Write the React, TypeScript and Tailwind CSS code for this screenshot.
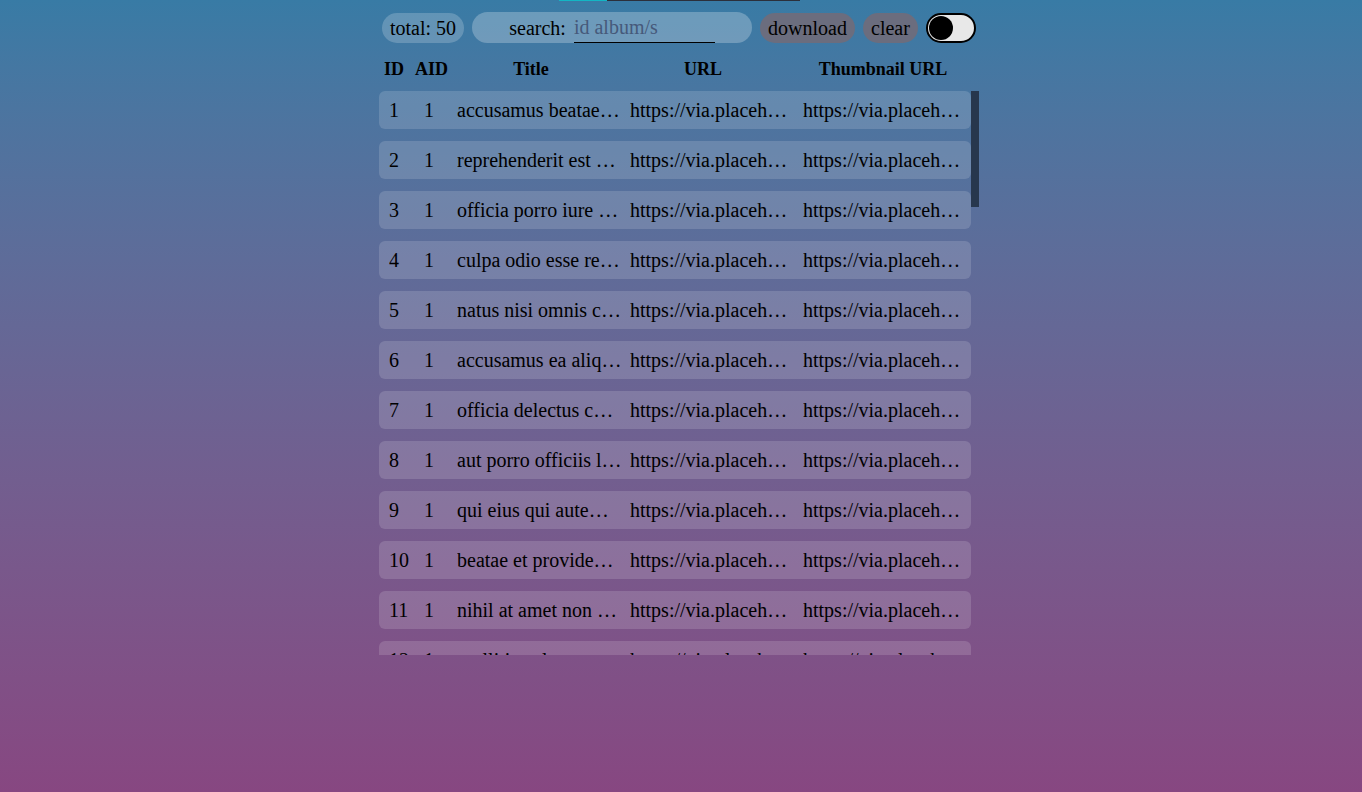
import { useState } from 'react';

interface Photo {
  id: number;
  albumId: number;
  title: string;
  url: string;
  thumbnailUrl: string;
}

const TITLES = [
  'accusamus beatae ad facilis cum similique qui sunt',
  'reprehenderit est deserunt velit ipsam',
  'officia porro iure quia iusto qui ipsa ut modi',
  'culpa odio esse rerum omnis laboriosam voluptate repudiandae',
  'natus nisi omnis corporis facere molestiae rerum in',
  'accusamus ea aliquid et amet sequi nemo',
  'officia delectus consequatur vero aut veniam explicabo molestias',
  'aut porro officiis laborum odit ea laudantium corporis',
  'qui eius qui autem sed',
  'beatae et provident et ut vel',
  'nihil at amet non hic quia qui',
  'mollitia soluta ut rerum eos aliquam consequatur perspiciatis maiores',
  'repudiandae iusto deleniti rerum',
  'est necessitatibus architecto ut laborum',
  'harum dicta similique quis dolore earum ex qui',
  'iusto sunt nobis quasi veritatis quas expedita voluptatum deserunt',
  'natus doloribus necessitatibus ipsa',
  'laboriosam odit nam necessitatibus et illum dolores reiciendis',
  'perferendis nesciunt eveniet et optio a',
  'assumenda voluptatem laboriosam enim consequatur veniam placeat reiciendis error',
];

const COLORS = ['92c952', '771796', '24f355', 'd32776', 'f66b97', '56a8c2', 'b0f7cc', '54176f', '51aa97', '810b14'];

const photos: Photo[] = Array.from({ length: 50 }, (_, i) => ({
  id: i + 1,
  albumId: 1,
  title: TITLES[i % TITLES.length],
  url: `https://via.placeholder.com/600/${COLORS[i % COLORS.length]}`,
  thumbnailUrl: `https://via.placeholder.com/150/${COLORS[i % COLORS.length]}`,
}));

function Toggle() {
  const [on, setOn] = useState(false);
  return (
    <button
      onClick={() => setOn(!on)}
      className="relative h-[30px] w-[50px] shrink-0 rounded-full border-2 border-black bg-[#e8e8e8]"
    >
      <span
        className={`absolute top-[1px] h-[24px] w-[24px] rounded-full bg-black ${on ? 'left-[22px]' : 'left-[1px]'}`}
      />
    </button>
  );
}

export default function App() {
  const [query, setQuery] = useState('');

  return (
    <div
      className="min-h-screen bg-gradient-to-b from-[#387ba5] to-[#874781] text-black"
      style={{ fontFamily: '"Liberation Serif", "Times New Roman", serif' }}
    >
      <div className="flex justify-center">
        <div className="mr-[4px] w-[600px]">
          {/* progress line */}
          <div className="mx-auto flex h-px w-[241px]">
            <div className="w-[48px] bg-[#13b6c4]" />
            <div className="flex-1 bg-[#2b303b]" />
          </div>

          {/* controls */}
          <div className="mt-[11px] flex h-[31px] items-center gap-2 pl-[3px] text-[20px]">
            <div className="flex h-[30px] items-center rounded-full bg-white/20 px-2">total: 50</div>
            <label className="flex h-[31px] w-[280px] items-center justify-center gap-2 rounded-full bg-white/25">
              <span>search:</span>
              <input
                value={query}
                onChange={(e) => setQuery(e.target.value)}
                placeholder="id album/s"
                className="h-[31px] w-[141px] border-b border-black bg-transparent pt-[1px] outline-none placeholder:text-[#46597a]"
              />
            </label>
            <button className="h-[30px] rounded-full bg-[#6b6d7e] px-2">download</button>
            <button className="h-[30px] rounded-full bg-[#6b6d7e] px-2">clear</button>
            <Toggle />
          </div>

          {/* header */}
          <div className="mt-[5px] flex h-[42px] items-center text-center text-[18px] font-bold">
            <div className="w-[30px]">ID</div>
            <div className="w-[45px]">AID</div>
            <div className="w-[154px]">Title</div>
            <div className="w-[190px]">URL</div>
            <div className="w-[170px]">Thumbnail URL</div>
          </div>

          {/* rows + scrollbar */}
          <div className="mt-px flex h-[564px]">
            <div className="flex w-[592px] flex-col gap-[12px] overflow-y-auto text-[20px] [scrollbar-width:none]">
              {photos.map((p) => (
                <div
                  key={p.id}
                  className="grid h-[38px] shrink-0 grid-cols-[35px_33px_173px_173px_1fr] items-center rounded-md bg-white/15 pl-[10px]"
                >
                  <div className="truncate">{p.id}</div>
                  <div className="truncate">{p.albumId}</div>
                  <div className="truncate pr-2">{p.title}</div>
                  <div className="truncate pr-2">{p.url}</div>
                  <div className="truncate pr-2">{p.thumbnailUrl}</div>
                </div>
              ))}
            </div>
            <div className="w-[8px]">
              <div className="h-[116px] bg-[#27374d]" />
            </div>
          </div>
        </div>
      </div>
    </div>
  );
}
